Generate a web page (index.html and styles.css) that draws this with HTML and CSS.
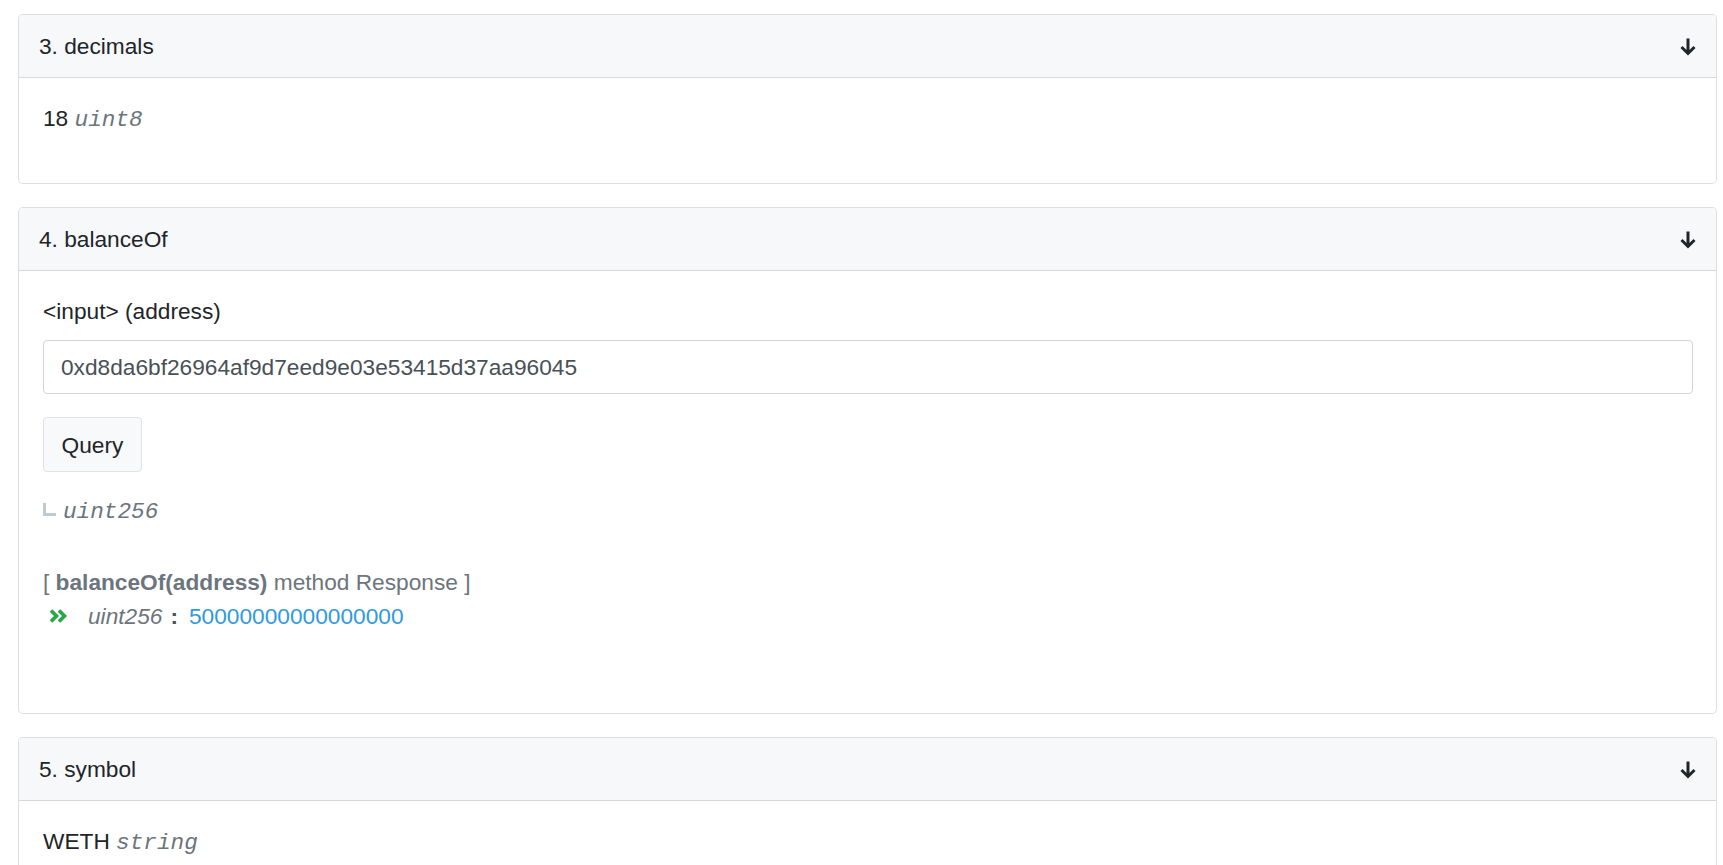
FILE: index.html
```html
<!DOCTYPE html>
<html>
<head>
<meta charset="utf-8">
<link rel="stylesheet" href="styles.css">
</head>
<body>
<div class="list">
  <section class="card">
    <div class="card-header">
      <span class="title">3. decimals</span>
      <svg class="arrow" width="18" height="19" viewBox="0 0 18 19"><path d="M9 1.5 V16.5 M2.5 10 L9 16.5 L15.5 10" fill="none" stroke="#212529" stroke-width="3" stroke-linecap="butt" stroke-linejoin="miter"/></svg>
    </div>
    <div class="card-body">
      <p class="value">18 <span class="type">uint8</span></p>
    </div>
  </section>

  <section class="card">
    <div class="card-header">
      <span class="title">4. balanceOf</span>
      <svg class="arrow" width="18" height="19" viewBox="0 0 18 19"><path d="M9 1.5 V16.5 M2.5 10 L9 16.5 L15.5 10" fill="none" stroke="#212529" stroke-width="3" stroke-linecap="butt" stroke-linejoin="miter"/></svg>
    </div>
    <div class="card-body">
      <label class="label">&lt;input&gt; (address)</label>
      <div class="input">0xd8da6bf26964af9d7eed9e03e53415d37aa96045</div>
      <button class="btn">Query</button>
      <div class="returns"><span class="corner"></span><span class="type">uint256</span></div>
      <div class="response">
        <div class="resp-title">[ <strong>balanceOf(address)</strong> method Response ]</div>
        <div class="resp-row">
          <svg class="chev" width="19" height="14" viewBox="0 0 19 14"><path d="M2 1.5 L7.5 7 L2 12.5 M10 1.5 L15.5 7 L10 12.5" fill="none" stroke="#28a745" stroke-width="3.6"/></svg>
          <i class="resp-type">uint256</i>
          <b class="colon">:</b>
          <span class="resp-val">50000000000000000</span>
        </div>
      </div>
    </div>
  </section>

  <section class="card">
    <div class="card-header">
      <span class="title">5. symbol</span>
      <svg class="arrow" width="18" height="19" viewBox="0 0 18 19"><path d="M9 1.5 V16.5 M2.5 10 L9 16.5 L15.5 10" fill="none" stroke="#212529" stroke-width="3" stroke-linecap="butt" stroke-linejoin="miter"/></svg>
    </div>
    <div class="card-body">
      <p class="value">WETH <span class="type">string</span></p>
    </div>
  </section>
</div>
</body>
</html>
```

FILE: styles.css
```css
* { box-sizing: border-box; }
html, body { margin: 0; padding: 0; background: #fff; }
body {
  font-family: "Liberation Sans", Arial, sans-serif;
  font-size: 22.7px;
  line-height: 34px;
  color: #212529;
  overflow: hidden;
  height: 865px;
}
.list {
  display: flex;
  flex-direction: column;
  gap: 23px;
  padding: 14px 6px 0 18px;
}
.card {
  border: 1px solid rgba(0,0,0,0.13);
  border-radius: 5px;
  background: #fff;
  overflow: hidden;
}
.card-header {
  display: flex;
  align-items: center;
  justify-content: space-between;
  background: #f7f8fa;
  border-bottom: 1px solid rgba(0,0,0,0.13);
  padding: 14px 19px 14px 20px;
  height: 63px;
}
.title { color: #212529; }
.arrow { display: block; margin-top: 1px; }
.card-body {
  padding: 23px 23px 24px 24px;
}
.value { margin: 0 0 22px 0; color: #212529; }
.type {
  font-family: "Liberation Mono", "Courier New", monospace;
  font-style: italic;
  color: #6c757d;
}
.label { display: block; margin-bottom: 12px; }
.input {
  border: 1px solid #ced4da;
  border-radius: 4px;
  padding: 9px 17px;
  color: #495057;
  height: 54px;
}
.btn {
  display: block;
  margin-top: 23px;
  font: inherit;
  line-height: 34px;
  color: #212529;
  background: #f8f9fa;
  border: 1px solid #dfe2e6;
  border-radius: 4px;
  padding: 10px 17px;
  height: 55px;
  width: 99px;
}
.returns {
  display: flex;
  align-items: center;
  margin-top: 23px;
}
.corner {
  display: inline-block;
  width: 13px;
  height: 13px;
  border-left: 3px solid #c3c9d1;
  border-bottom: 3px solid #c3c9d1;
  margin-right: 7px;
  margin-top: -6px;
}
.response {
  margin-top: 36px;
  margin-bottom: 56px;
  color: #6c757d;
}
.resp-title strong { font-weight: bold; }
.resp-row {
  display: flex;
  align-items: center;
}
.chev { margin-left: 6px; margin-right: 20px; }
.resp-type { font-style: italic; color: #6c757d; }
.colon { color: #495057; margin: 0 11px 0 8px; }
.resp-val { color: #2f9ae0; }
```
